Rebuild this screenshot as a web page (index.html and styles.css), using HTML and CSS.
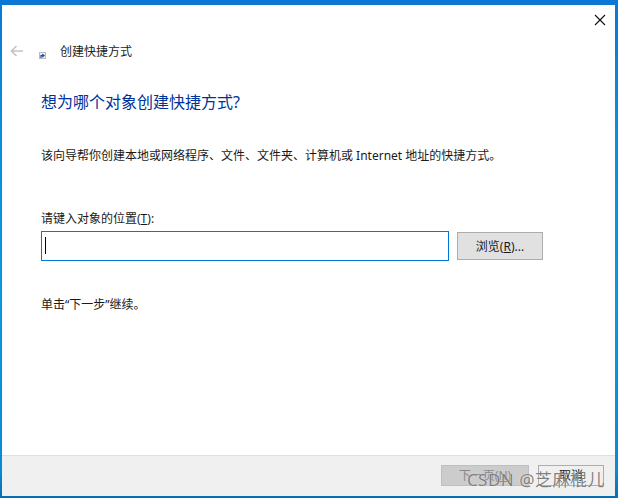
FILE: index.html
```html
<!DOCTYPE html>
<html lang="zh-CN">
<head>
<meta charset="utf-8">
<title>创建快捷方式</title>
<link rel="stylesheet" href="styles.css">
</head>
<body>
<div class="window">
  <div class="client">
    <div class="close-row">
      <svg class="close" width="12" height="12" viewBox="0 0 12 12"><path d="M1 1L11 11M11 1L1 11" stroke="#111" stroke-width="1.1" fill="none"/></svg>
    </div>
    <div class="nav">
      <svg class="back" width="14" height="12" viewBox="0 0 14 12"><path d="M13 6H2M6.500 1L1.500 6L6.500 11" stroke="#c4c4c4" stroke-width="1.600" fill="none"/></svg>
      <svg class="shortcut" width="7" height="7" viewBox="0 0 7 7"><rect x="0.500" y="0.500" width="6" height="6" fill="#eee" stroke="#bbb"/><path d="M2 6V3.500H4M3.200 2.200L5 3.500L3.200 5" stroke="#1c4f9c" stroke-width="1.200" fill="none"/></svg>
      <span class="nav-title">创建快捷方式</span>
    </div>
    <div class="content">
      <h1 class="heading">想为哪个对象创建快捷方式?</h1>
      <p class="intro">该向导帮你创建本地或网络程序、文件、文件夹、计算机或 Internet 地址的快捷方式。</p>
      <label class="field-label" for="target">请键入对象的位置(<u>T</u>):</label>
      <div class="field-row">
        <div class="input" id="target"><span class="caret"></span></div>
        <button class="btn browse">浏览(<u>R</u>)...</button>
      </div>
      <p class="hint">单击“下一步”继续。</p>
    </div>
    <div class="footer">
      <button class="btn next">下一页(<u>N</u>)</button>
      <button class="btn cancel">取消</button>
    </div>
  </div>
  <div class="watermark">CSDN @芝麻棍儿</div>
</div>
</body>
</html>
```
FILE: styles.css
```css
* { box-sizing: border-box; }
html, body { margin: 0; height: 100%; }
body {
  width: 618px;
  height: 498px;
  overflow: hidden;
  font-family: "Noto Sans", "Noto Sans CJK SC", sans-serif;
  font-size: 12px;
  color: #1a1a1a;
}
.window {
  position: relative;
  width: 618px;
  height: 498px;
  padding: 5px 3px 2px 2px;
  background: linear-gradient(to bottom, #0a78d4 0, #0a8cdc 120px, #0a97de 300px, #0a8ad4 470px, #0a6db0 498px);
}
.client {
  height: 100%;
  background: #fff;
  display: flex;
  flex-direction: column;
}
.close-row {
  display: flex;
  justify-content: flex-end;
  padding: 9px 9px 0 0;
  height: 28px;
}
.nav {
  display: flex;
  align-items: center;
  height: 18px;
  margin-top: 9px;
  padding-left: 8px;
}
.back { flex: none; }
.shortcut { flex: none; margin: 9px 0 0 15px; }
.nav-title { margin-left: 14px; color: #222; }
.content {
  flex: 1;
  padding-left: 39px;
}
.heading {
  margin: 31px 0 0;
  font-size: 16px;
  font-weight: normal;
  line-height: 22px;
  color: #003399;
}
.intro {
  margin: 34px 0 0;
  line-height: 18px;
}
.field-label {
  display: block;
  margin-top: 45px;
  line-height: 18px;
}
.field-row {
  display: flex;
  align-items: center;
  margin-top: 3px;
}
.input {
  width: 408px;
  height: 30px;
  border: 1px solid #0078d7;
  background: #fff;
  padding: 5px 0 0 3px;
}
.caret {
  display: block;
  width: 1px;
  height: 17px;
  background: #000;
}
.btn {
  height: 28px;
  font: inherit;
  padding: 0;
  color: #1a1a1a;
  background: #e1e1e1;
  border: 1px solid #adadad;
}
.browse {
  width: 86px;
  margin-left: 8px;
}
.hint {
  margin: 35px 0 0;
  line-height: 18px;
}
.footer {
  flex: none;
  height: 41px;
  display: flex;
  justify-content: flex-end;
  gap: 9px;
  padding: 9px 11px 0 0;
  background: #f0f0f0;
  border-top: 1px solid #dfdfdf;
}
.footer .btn { height: 21px; line-height: 19px; }
.next { width: 88px; color: #8a8a8a; background: #cccccc; border-color: #bfbfbf; }
.cancel { width: 66px; background: #f0f0f0; border-color: #adadad; }
.watermark {
  position: absolute;
  right: 13px;
  bottom: 7px;
  font-size: 17px;
  letter-spacing: 0.5px;
  line-height: 22px;
  color: rgba(105, 105, 105, 0.85);
  text-shadow: 0 0 1px rgba(255,255,255,0.9);
}
```
